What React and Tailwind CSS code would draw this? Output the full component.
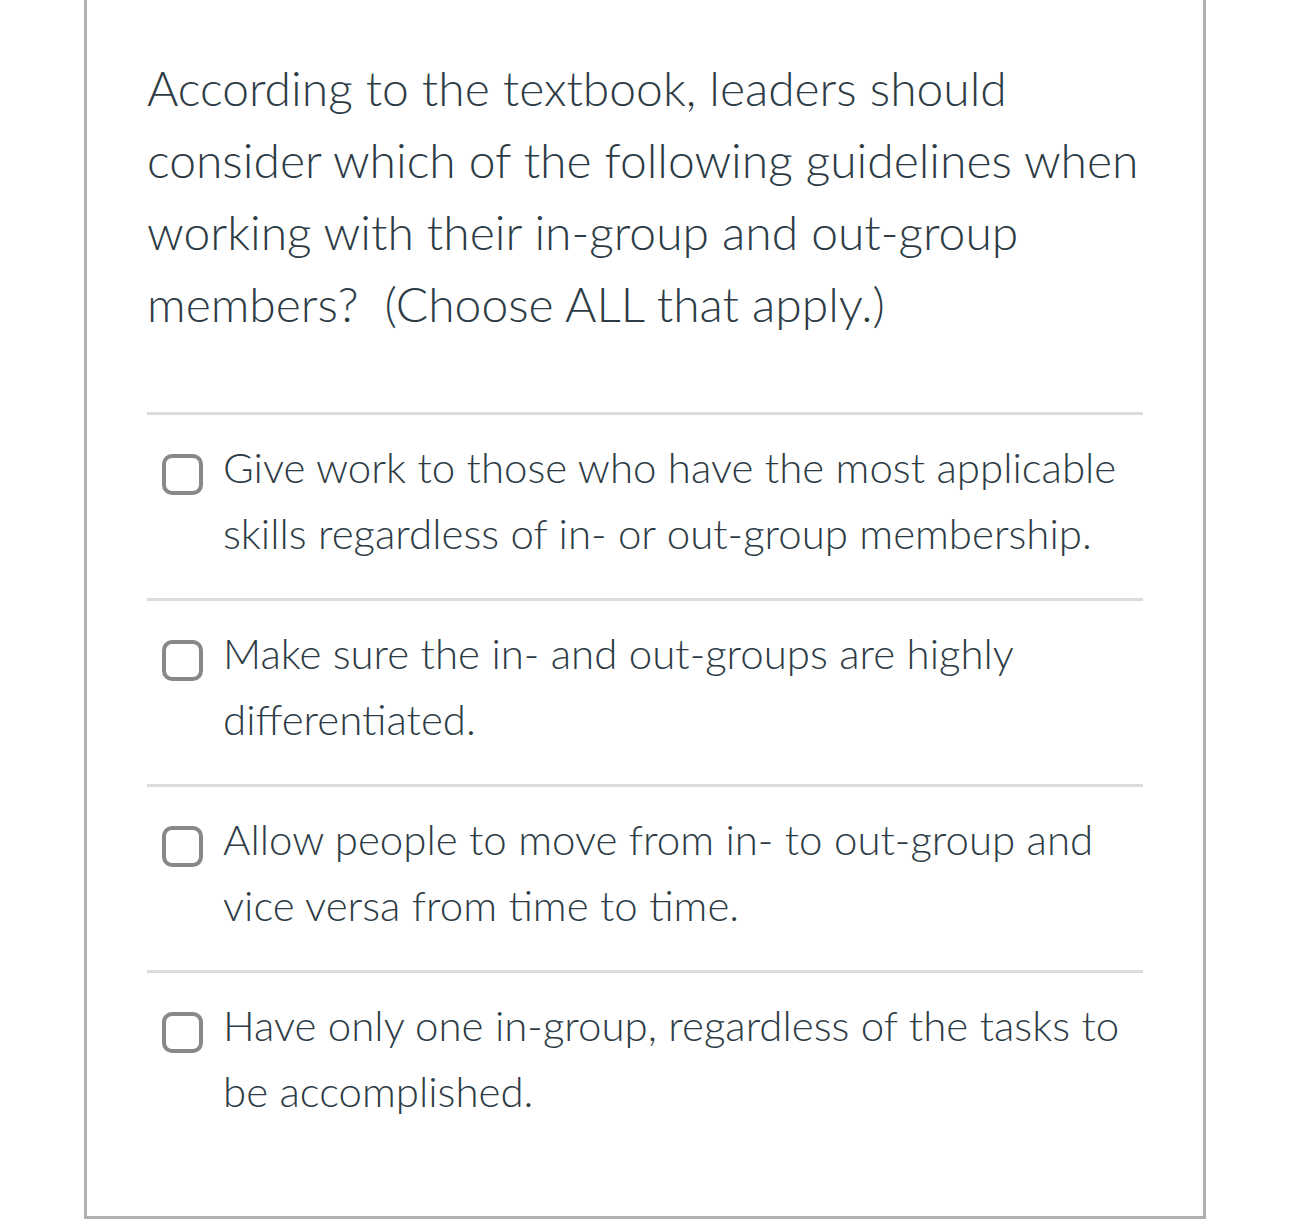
const OPTIONS = [
  "Give work to those who have the most applicable skills regardless of in- or out-group membership.",
  "Make sure the in- and out-groups are highly differentiated.",
  "Allow people to move from in- to out-group and vice versa from time to time.",
  "Have only one in-group, regardless of the tasks to be accomplished.",
];

export default function App() {
  return (
    <div className="min-h-[1231px] bg-white" style={{ fontFamily: "Lato, 'Open Sans', sans-serif" }}>
      <div className="ml-[84px] w-[1122px] h-[1219px] border-x-[3px] border-b-[3px] border-[#afafaf] px-[60px] pt-[52px] text-[#2d3b45] font-light">
        <p className="text-[48px] leading-[72px]">
          According to the textbook, leaders should consider which of the following guidelines when working with their in-group and out-group members?&nbsp; (Choose ALL that apply.)
        </p>
        <div className="mt-[72px]">
          {OPTIONS.map((opt) => (
            <div key={opt} className="border-t-[3px] border-[#dcdcdc] pt-[19px] pb-[32px] flex items-start">
              <span className="mt-[20px] ml-[15px] mr-[20px] w-[41px] h-[41px] shrink-0 rounded-[10px] border-[4px] border-[#888888]" />
              <span className="text-[42px] leading-[66px]">{opt}</span>
            </div>
          ))}
        </div>
      </div>
    </div>
  );
}
